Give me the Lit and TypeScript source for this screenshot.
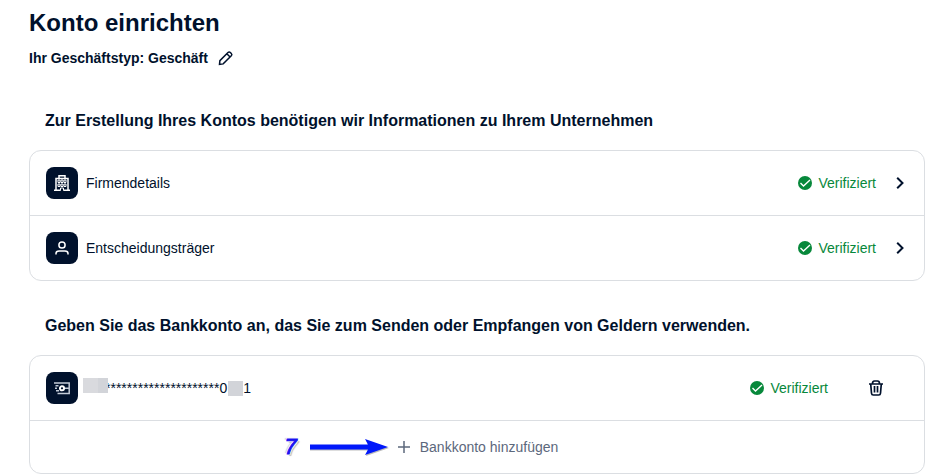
import { LitElement, html, svg, css } from "lit";
import { customElement } from "lit/decorators.js";

const building = svg`<path d="M5 3V.8h6V3M2 15V3.500h12V15M0 15.200h6.500M9.500 15.200h6.500" /><path d="M4 5h2v2.500H4zM7 5h2v2.500H7zM10 5h2v2.500h-2zM4 9h2v2.500H4zM7 9h2v2.500H7zM10 9h2v2.500h-2z" stroke-width="1" /><path d="M6.500 15.500V13h3v2.500" stroke-width="1" />`;
const person = svg`<circle cx="8" cy="5" r="3.1" /><path d="M2 14.500v-1c0-1.700 1.300-2.500 3-2.500h6c1.700 0 3 .8 3 2.500v1" />`;
const transfer = svg`<path d="M0 3h15.200v10.500H3.500M1.500 5.800h3M1 8.300h2M2 10.800h3M11 8.300h4" stroke="#c4ccd8" stroke-width="1.500" /><circle cx="8" cy="8.300" r="2.100" fill="#00112c" stroke-width="1.900" />`;

const check = html`<svg class="check" viewBox="0 0 14 14" aria-hidden="true">
  <circle cx="7" cy="7" r="7" fill="#07883b" />
  <path d="M2.500 7l3 3L12 4" fill="none" stroke="#fff" stroke-width="1.400" />
</svg>`;

const chevron = html`<svg class="icon" viewBox="0 0 16 16" aria-hidden="true">
  <path d="M5.200 2.700l5.300 5.300-5.300 5.300" stroke-width="2" />
</svg>`;

@customElement("app-root")
export class AppRoot extends LitElement {
  static styles = css`
    :host {
      display: block;
      box-sizing: border-box;
      padding: 8px 13px 0 29px;
      background: #fff;
      color: #00112c;
      font: 14px/20px "Liberation Sans", Arial, sans-serif;
    }
    h1 { margin: 0; font-size: 24px; line-height: 30px; }
    .type { display: flex; align-items: center; gap: 10px; margin-top: 10px; font-weight: bold; }
    h2 { margin: 0 16px 19px; font-size: 16px; line-height: 20px; }
    section { margin-top: 35px; }
    .first { margin-top: 43px; }
    button {
      display: flex;
      align-items: center;
      margin: 0;
      padding: 0;
      border: 0;
      background: none;
      color: inherit;
      font: inherit;
      cursor: pointer;
    }
    .card { border: 1px solid #dbdee2; border-radius: 12px; }
    .row { display: flex; align-items: center; box-sizing: border-box; width: 100%; height: 64px; padding: 0 16px; }
    .row + .row, .row + .footer { border-top: 1px solid #dbdee2; }
    .card .row + .row { height: 65px; }
    .tile {
      display: flex;
      align-items: center;
      justify-content: center;
      width: 32px;
      height: 32px;
      margin-right: 8px;
      border-radius: 8px;
      background: #00112c;
      color: #fff;
    }
    .icon { display: block; width: 16px; height: 16px; fill: none; stroke: currentColor; stroke-width: 1.5; }
    .check { width: 14px; height: 14px; margin-right: 6px; }
    .status { display: flex; align-items: center; margin-left: auto; color: #07883b; }
    .status + .icon { margin-left: 16px; }
    .account .tile { margin-right: 5px; }
    .number { display: flex; align-items: center; }
    .mask { position: relative; width: 15px; height: 15px; margin-left: 1px; background: #d2d4d9; }
    .lead { width: 25px; margin: 0 -3px 5px 0; background: linear-gradient(90deg, #d9dade 15px, #d2d4d9 15px); }
    .remove { margin: 0 24px 0 40px; }
    .footer { display: flex; justify-content: center; height: 52px; }
    .add { position: relative; gap: 8px; color: #5c687c; }
    .hint {
      position: absolute;
      right: 100%;
      display: flex;
      align-items: center;
      gap: 12px;
      margin-right: 7px;
      color: #1a12f0;
      font-size: 22px;
      line-height: 24px;
      font-style: italic;
      -webkit-text-stroke: 1px #1a12f0;
      text-shadow: 1px 1px 0 #fff, -1px -1px 0 #fff, 2px 2px 1px #bbb, -2px -1px 1px #ccc;
    }
    .arrow { width: 80px; height: 18px; }
  `;

  private entry(icon: unknown, label: string) {
    return html`<button class="row">
      <span class="tile"><svg class="icon" viewBox="0 0 16 16" aria-hidden="true">${icon}</svg></span>
      <span>${label}</span>
      <span class="status">${check}Verifiziert</span>
      ${chevron}
    </button>`;
  }

  render() {
    return html`
      <h1>Konto einrichten</h1>
      <div class="type">
        <span>Ihr Geschäftstyp: Geschäft</span>
        <button aria-label="Geschäftstyp bearbeiten">
          <svg class="icon" viewBox="0 0 16 16" aria-hidden="true">
            <path d="M1.500 14.300l.4-3.700L10 2.500c.7-.7 1.600-.7 2.300 0l1 1c.7.7.7 1.600 0 2.300L5.200 13.900zM8.800 3.700l3.300 3.300" stroke-width="1.500" />
          </svg>
        </button>
      </div>

      <section class="first">
        <h2>Zur Erstellung Ihres Kontos benötigen wir Informationen zu Ihrem Unternehmen</h2>
        <div class="card">
          ${this.entry(building, "Firmendetails")}
          ${this.entry(person, "Entscheidungsträger")}
        </div>
      </section>

      <section>
        <h2>Geben Sie das Bankkonto an, das Sie zum Senden oder Empfangen von Geldern verwenden.</h2>
        <div class="card">
          <div class="row account">
            <span class="tile"><svg class="icon" viewBox="0 0 16 16" aria-hidden="true">${transfer}</svg></span>
            <span class="number"><span class="mask lead"></span>*********************0<span class="mask"></span>1</span>
            <span class="status">${check}Verifiziert</span>
            <button class="remove" aria-label="Bankkonto löschen">
              <svg class="icon" viewBox="0 0 16 16" aria-hidden="true">
                <path d="M1 4h14M4.500 3.500c0-1.500.5-2.500 2-2.500h3c1.500 0 2 1 2 2.500M2.700 4l.8 9.200c.1 1.200.7 1.800 1.800 1.800h5.400c1.100 0 1.700-.6 1.800-1.800L13.300 4M6.500 6v6.500M9.500 6v6.500" stroke-width="1.700" />
              </svg>
            </button>
          </div>
          <div class="footer">
            <button class="add">
              <span class="hint">7
                <svg class="arrow" viewBox="0 0 80 18" aria-hidden="true">
                  <path d="M1 7.500h58L57 2l23 8-23 8 2-5.500H1z" fill="#777" opacity=".5" />
                  <path d="M1 6.500h58L56 1l23 8-23 8 3-5.500H1z" fill="#0018fa" />
                </svg>
              </span>
              <svg class="icon" viewBox="0 0 16 16" aria-hidden="true"><path d="M8 2v12M2 8h12" /></svg>
              <span>Bankkonto hinzufügen</span>
            </button>
          </div>
        </div>
      </section>
    `;
  }
}
